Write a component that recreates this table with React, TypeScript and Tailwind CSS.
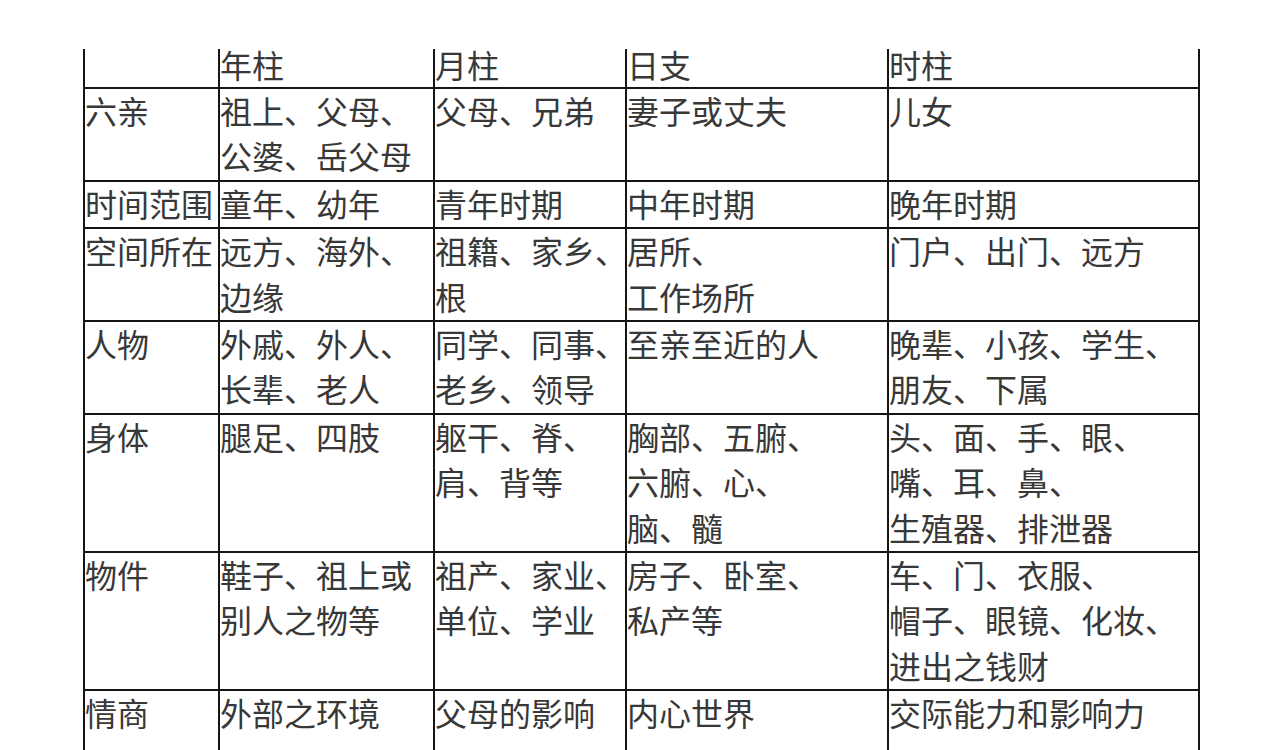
const header = ["", "年柱", "月柱", "日支", "时柱"];

const rows: string[][][] = [
  [["六亲"], ["祖上、父母、", "公婆、岳父母"], ["父母、兄弟"], ["妻子或丈夫"], ["儿女"]],
  [["时间范围"], ["童年、幼年"], ["青年时期"], ["中年时期"], ["晚年时期"]],
  [["空间所在"], ["远方、海外、", "边缘"], ["祖籍、家乡、", "根"], ["居所、", "工作场所"], ["门户、出门、远方"]],
  [["人物"], ["外戚、外人、", "长辈、老人"], ["同学、同事、", "老乡、领导"], ["至亲至近的人"], ["晚辈、小孩、学生、", "朋友、下属"]],
  [["身体"], ["腿足、四肢"], ["躯干、脊、", "肩、背等"], ["胸部、五腑、", "六腑、心、", "脑、髓"], ["头、面、手、眼、", "嘴、耳、鼻、", "生殖器、排泄器"]],
  [["物件"], ["鞋子、祖上或", "别人之物等"], ["祖产、家业、", "单位、学业"], ["房子、卧室、", "私产等"], ["车、门、衣服、", "帽子、眼镜、化妆、", "进出之钱财"]],
  [["情商"], ["外部之环境"], ["父母的影响"], ["内心世界"], ["交际能力和影响力"]],
];

export default function App() {
  return (
    <div className="w-[1284px] h-[750px] bg-white overflow-hidden pt-[49px]">
      <table
        className="table-fixed border-collapse ml-[83px] w-[1115px] text-[32px] leading-[45.4px] text-[#383838]"
        style={{ fontFamily: '"Noto Sans CJK SC", "Noto Sans", sans-serif' }}
      >
        <colgroup>
          <col className="w-[135px]" />
          <col className="w-[215px]" />
          <col className="w-[192px]" />
          <col className="w-[262px]" />
          <col className="w-[311px]" />
        </colgroup>
        <tbody>
          <tr>
            {header.map((h, i) => (
              <td
                key={i}
                className="border-2 border-t-0 border-[#151515] p-0 h-[39px] leading-[30px] align-top whitespace-nowrap"
              >
                {h || "\u00a0"}
              </td>
            ))}
          </tr>
          {rows.map((r, i) => (
            <tr key={i}>
              {r.map((c, j) => (
                <td
                  key={j}
                  className={
                    "border-2 border-[#151515] p-0 align-top whitespace-nowrap" +
                    (i === rows.length - 1 ? " h-[90px]" : "")
                  }
                >
                  <div className="-translate-y-[1px]">
                    {c.map((l, k) => (
                      <div key={k}>{l}</div>
                    ))}
                  </div>
                </td>
              ))}
            </tr>
          ))}
        </tbody>
      </table>
    </div>
  );
}
